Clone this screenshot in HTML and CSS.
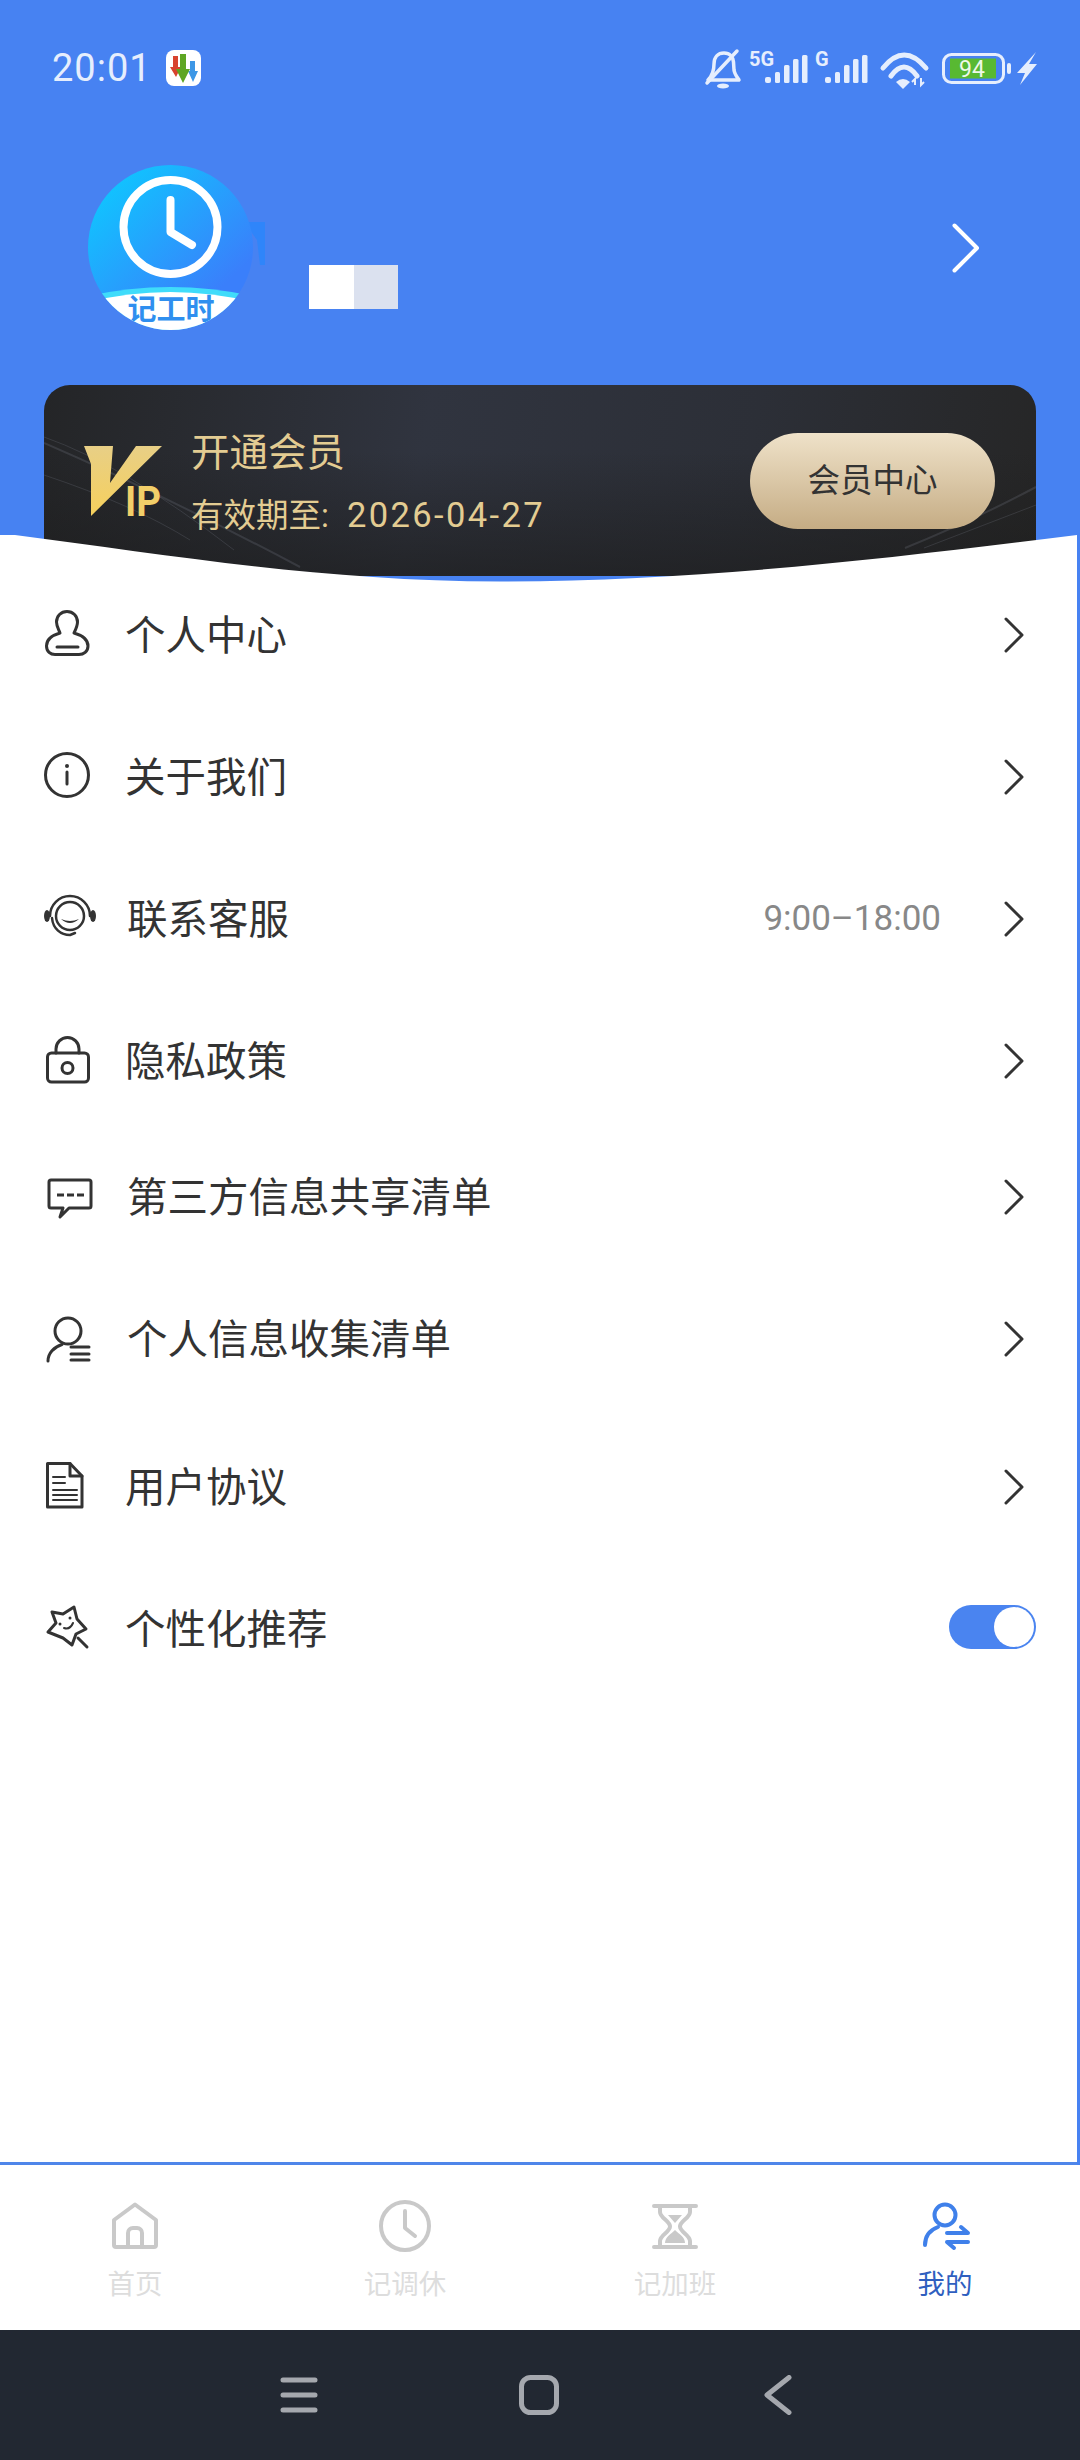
FILE: index.html
```html
<!DOCTYPE html>
<html lang="zh-CN">
<head>
    <meta charset="UTF-8">
    <meta name="viewport" content="width=device-width, initial-scale=1.0">
    <title>我的</title>
    <link rel="stylesheet" href="styles.css">
</head>
<body>
    <svg class="defs" width="0" height="0">
        <symbol id="chevron" viewBox="0 0 20 36">
            <path d="M2 2 L18 18 L2 34" fill="none" stroke="currentColor" stroke-width="3" stroke-linecap="round" stroke-linejoin="round"/>
        </symbol>
    </svg>

    <div class="app">
        <header class="header">
            <div class="statusbar">
                <div class="status-left">
                    <span class="clock">20:01</span>
                    <svg class="app-badge" viewBox="0 0 35 36">
                        <rect width="35" height="36" rx="8" fill="#fff"/>
                        <path d="M7 6h5v11h3l-5 10-6-10h3z" fill="#d8432f"/>
                        <path d="M24 11h5v10h3l-5 11-5-11h2z" fill="#3d97e6"/>
                        <path d="M14 4h6v15h4l-7 14-7-14h4z" fill="#5ea623"/>
                    </svg>
                </div>
                <svg class="status-right" viewBox="700 45 340 50" fill="#e6eefd">
                    <g fill="none" stroke="#e6eefd" stroke-width="3.500" stroke-linecap="round" stroke-linejoin="round">
                        <path d="M708 80 C713 75 714 70 714 64 C714 57 718 53 724 53 C730 53 733 57 733.500 62 L734 70 C734.500 74 737 77 739 80 Z"/>
                        <path d="M707 83 L737 51"/>
                    </g>
                    <ellipse cx="723" cy="86" rx="6" ry="2.500"/>
                    <text class="status-net" x="749" y="66">5G</text>
                    <rect x="765" y="77" width="6" height="6" rx="2"/>
                    <rect x="775" y="72" width="5" height="11" rx="1.500"/>
                    <rect x="784" y="65" width="5.500" height="18" rx="1.500"/>
                    <rect x="793" y="59" width="5.500" height="24" rx="1.500"/>
                    <rect x="802" y="55" width="5.500" height="28" rx="1.500"/>
                    <text class="status-net" x="815" y="66">G</text>
                    <rect x="825" y="77" width="6" height="6" rx="2"/>
                    <rect x="835" y="72" width="5" height="11" rx="1.500"/>
                    <rect x="844" y="65" width="5.500" height="18" rx="1.500"/>
                    <rect x="853" y="59" width="5.500" height="24" rx="1.500"/>
                    <rect x="862" y="55" width="5.500" height="28" rx="1.500"/>
                    <g fill="none" stroke="#e6eefd" stroke-width="5" stroke-linecap="round">
                        <path d="M883 68 Q904 42 926 68"/>
                        <path d="M891 76 Q904 58 917 76"/>
                    </g>
                    <path d="M896 82 Q903 76 910 82 L903 89 Z"/>
                    <path d="M915 85 V79 L912 82 M921 78 V85 L924 82" fill="none" stroke="#e6eefd" stroke-width="2"/>
                    <rect x="943.500" y="54.500" width="60" height="28" rx="8" fill="none" stroke="#e6eefd" stroke-width="3"/>
                    <rect x="950" y="58.500" width="46" height="20" fill="#58b932"/>
                    <text class="status-batt" x="972" y="76.500" text-anchor="middle">94</text>
                    <rect x="1007" y="63" width="4" height="11" rx="2"/>
                    <path d="M1036 52 L1017 73 L1025 73 L1020 85 L1037 64 L1029 64 Z"/>
                </svg>
            </div>

            <div class="profile">
                <svg class="avatar" viewBox="88 165 180 165">
                    <defs>
                        <linearGradient id="avatarBg" x1="0.15" y1="0.05" x2="0.8" y2="0.75">
                            <stop offset="0" stop-color="#0fc6ff"/>
                            <stop offset="1" stop-color="#3a7ffb"/>
                        </linearGradient>
                        <clipPath id="avatarClip">
                            <circle cx="170.500" cy="247.500" r="82.500"/>
                        </clipPath>
                    </defs>
                    <path d="M244 222 H265 V265 H260 L257 240 Z" fill="#2f85fa"/>
                    <circle cx="170.500" cy="247.500" r="82.500" fill="url(#avatarBg)"/>
                    <g clip-path="url(#avatarClip)">
                        <path d="M88 296 Q170 278 253 296 V330 H88 Z" fill="#3fdcfa"/>
                        <path d="M88 302 Q170 282 253 302 V330 H88 Z" fill="#fff"/>
                        <text class="avatar-label" x="171" y="320" text-anchor="middle">记工时</text>
                    </g>
                    <circle cx="170.500" cy="227" r="47" fill="none" stroke="#fff" stroke-width="8"/>
                    <path d="M170.500 200 V232 L192 245" fill="none" stroke="#fff" stroke-width="8" stroke-linecap="round" stroke-linejoin="round"/>
                </svg>
                <div class="name-mask">
                    <span class="mask-white"></span>
                    <span class="mask-grey"></span>
                </div>
                <svg class="profile-arrow" viewBox="0 0 28 50">
                    <path d="M2.500 2.500 L25 25 L2.500 47.500" fill="none" stroke="#fff" stroke-width="4" stroke-linecap="round" stroke-linejoin="round"/>
                </svg>
            </div>

            <div class="vip-card">
                <svg class="vip-lines" viewBox="0 0 992 191" preserveAspectRatio="none">
                    <g fill="none" stroke="#8a90a0" stroke-opacity="0.2">
                        <path d="M0 58 Q120 110 256 182" stroke-width="2"/>
                        <path d="M0 52 Q80 80 190 165" stroke-width="1"/>
                        <path d="M0 90 Q90 120 146 155" stroke-width="1"/>
                        <path d="M861 163 Q930 135 992 102" stroke-width="2"/>
                        <path d="M880 163 Q940 140 992 120" stroke-width="1"/>
                    </g>
                </svg>
                <svg class="vip-logo" viewBox="0 0 78 72">
                    <defs>
                        <linearGradient id="vipGold" x1="0.3" y1="0" x2="0.3" y2="1">
                            <stop offset="0" stop-color="#e8cf86"/>
                            <stop offset="1" stop-color="#f6d05c"/>
                        </linearGradient>
                    </defs>
                    <path d="M0 1 H29 L26 38 L52 1 H78 L7 71 V19 Z" fill="url(#vipGold)"/>
                    <text class="vip-ip" x="41" y="71" textLength="36" lengthAdjust="spacingAndGlyphs">IP</text>
                </svg>
                <div class="vip-text">
                    <div class="vip-title">开通会员</div>
                    <div class="vip-date">有效期至: <span class="vip-day">2026-04-27</span></div>
                </div>
                <div class="vip-button">会员中心</div>
            </div>
        </header>

        <main class="sheet">
            <svg class="wave" viewBox="0 0 1077 47" preserveAspectRatio="none">
                <path d="M0 0 L15 0 C170 20 320 46 500 46.500 C700 46.500 900 22 1077 0 V47 H0 Z" fill="#fff"/>
            </svg>
            <div class="menu">
                <div class="row">
                    <svg class="row-icon" viewBox="0 0 56 56">
                        <path d="M23 6.500 C17 6.500 12.500 11 12.500 17 C12.500 21 14.500 24 16 28 C9 30 2.500 34 2.500 41 C2.500 46.500 6.500 49.500 11 49.500 H35 C39.500 49.500 44 46.500 44 41 C44 34 37 30 30 28 C32 24 33.500 21 33.500 17 C33.500 11 29 6.500 23 6.500 Z"/>
                        <path d="M13 42 H34"/>
                    </svg>
                    <span class="row-label">个人中心</span>
                    <svg class="row-arrow"><use href="#chevron"/></svg>
                </div>
                <div class="row">
                    <svg class="row-icon" viewBox="0 0 56 56">
                        <circle cx="23" cy="28" r="21.500"/>
                        <circle class="icon-dot" cx="23" cy="19" r="2"/>
                        <path d="M23 25 V37"/>
                    </svg>
                    <span class="row-label">关于我们</span>
                    <svg class="row-arrow"><use href="#chevron"/></svg>
                </div>
                <div class="row row-wide">
                    <svg class="row-icon icon-thin" viewBox="0 0 56 56">
                        <path d="M6 27 A20 20 0 0 1 46 27"/>
                        <circle cx="26" cy="27" r="14"/>
                        <path d="M8 29 C9 40 17 46 26 46 L31 44"/>
                        <path class="icon-solid" d="M17 30 Q26 38 35 30 Q26 34 17 30 Z"/>
                        <ellipse class="icon-solid" cx="3" cy="27" rx="3" ry="6"/>
                        <ellipse class="icon-solid" cx="49" cy="27" rx="3" ry="6"/>
                    </svg>
                    <span class="row-label">联系客服</span>
                    <span class="row-note">9:00–18:00</span>
                    <svg class="row-arrow"><use href="#chevron"/></svg>
                </div>
                <div class="row">
                    <svg class="row-icon" viewBox="0 0 56 56">
                        <rect x="3.500" y="22" width="41" height="29" rx="4"/>
                        <path d="M12 22 V18 A11.500 11.500 0 0 1 35 18 V22"/>
                        <circle cx="23.500" cy="37" r="5.500"/>
                    </svg>
                    <span class="row-label">隐私政策</span>
                    <svg class="row-arrow"><use href="#chevron"/></svg>
                </div>
                <div class="row row-wide row-tight">
                    <svg class="row-icon" viewBox="0 0 56 56">
                        <path d="M7 13 H45 A2 2 0 0 1 47 15 V39 A2 2 0 0 1 45 41 H25 L16 50 L19 41 H7 A2 2 0 0 1 5 39 V15 A2 2 0 0 1 7 13 Z"/>
                        <path d="M13 28 H40" stroke-dasharray="7 3" stroke-linecap="butt"/>
                    </svg>
                    <span class="row-label">第三方信息共享清单</span>
                    <svg class="row-arrow"><use href="#chevron"/></svg>
                </div>
                <div class="row row-wide">
                    <svg class="row-icon" viewBox="0 0 56 56">
                        <circle cx="24" cy="22" r="13"/>
                        <path d="M4 52 C4 44 10 38 18 35.500"/>
                        <path d="M27 38 H45 M27 45 H45 M27 51 H45"/>
                    </svg>
                    <span class="row-label">个人信息收集清单</span>
                    <svg class="row-arrow"><use href="#chevron"/></svg>
                </div>
                <div class="row row-loose">
                    <svg class="row-icon" viewBox="0 0 56 56">
                        <path d="M3.500 6.500 H26 L38 19 V50 H3.500 Z"/>
                        <path d="M26 6.500 V19 H38"/>
                        <path class="icon-lines" d="M9 20 H21 M9 26 H21 M9 33 H33 M9 38 H33 M9 43 H33"/>
                    </svg>
                    <span class="row-label">用户协议</span>
                    <svg class="row-arrow"><use href="#chevron"/></svg>
                </div>
                <div class="row">
                    <svg class="row-icon" viewBox="0 0 56 56">
                        <path d="M8 13 L19 15 L30 8 L33 20 L42 30 L32 35 L28 46 L19 39 L4 33 L12 24 Z"/>
                        <path d="M34 39 L43 48"/>
                        <path class="icon-lines" d="M20 29 Q26 31 29 24"/>
                        <circle class="icon-dot" cx="16" cy="25" r="1.500"/>
                        <circle class="icon-dot" cx="26" cy="19" r="1.500"/>
                    </svg>
                    <span class="row-label">个性化推荐</span>
                    <div class="switch"><span class="switch-knob"></span></div>
                </div>
            </div>
        </main>

        <nav class="tabbar">
            <div class="tab">
                <svg class="tab-icon" viewBox="0 0 52 52">
                    <path d="M5 20 L26 4.500 L47 20 V45 A2 2 0 0 1 45 47 H7 A2 2 0 0 1 5 45 Z"/>
                    <path d="M19 47 V33 A5 5 0 0 1 24 28 H28 A5 5 0 0 1 33 33 V47"/>
                </svg>
                <span class="tab-label">首页</span>
            </div>
            <div class="tab">
                <svg class="tab-icon" viewBox="0 0 52 52">
                    <circle cx="26" cy="26" r="24"/>
                    <path d="M26 11 V28 L36 36"/>
                </svg>
                <span class="tab-label">记调休</span>
            </div>
            <div class="tab">
                <svg class="tab-icon" viewBox="0 0 52 52">
                    <path d="M5 6 H47 M5 47 H47"/>
                    <path d="M11 6 V12 C11 18 21 21 21 26.500 C21 32 11 35 11 41 V47 M41 6 V12 C41 18 31 21 31 26.500 C31 32 41 35 41 41 V47"/>
                    <path class="tab-fill" d="M19 15 H33 L26 23 Z M26 30 C30 34 36 37 36 43 H16 C16 37 22 34 26 30 Z"/>
                </svg>
                <span class="tab-label">记加班</span>
            </div>
            <div class="tab tab-active">
                <svg class="tab-icon" viewBox="0 0 52 52">
                    <circle cx="26" cy="15" r="10.500"/>
                    <path d="M6 45 C6 36 11 30 19 27"/>
                    <path d="M28 33 H49 L42 27 M49 42 H28 L35 48"/>
                </svg>
                <span class="tab-label">我的</span>
            </div>
        </nav>

        <div class="navbar">
            <svg class="nav-icon" viewBox="0 0 40 40">
                <path d="M4 5 H36 M4 20 H36 M4 35 H36"/>
            </svg>
            <svg class="nav-icon" viewBox="0 0 40 40">
                <rect x="2.500" y="2.500" width="35" height="35" rx="9"/>
            </svg>
            <svg class="nav-icon" viewBox="0 0 40 40">
                <path d="M30 2.500 L8 20 L30 37.500"/>
            </svg>
        </div>
    </div>
</body>
</html>
```

FILE: styles.css
```css
* {
    box-sizing: border-box;
}
body {
    margin: 0;
    font-family: Roboto, "Noto Sans CJK SC", sans-serif;
    color: #333;
}
.defs {
    display: block;
    height: 0;
}
.app {
    width: 1080px;
    height: 2460px;
    display: flex;
    flex-direction: column;
    background: #4782f2;
    overflow: hidden;
}

/* status bar */
.statusbar {
    height: 136px;
    display: flex;
    align-items: center;
    justify-content: space-between;
    padding: 0 40px 0 52px;
}
.status-left {
    display: flex;
    align-items: center;
    gap: 14px;
}
.clock {
    font-size: 38px;
    line-height: 44px;
    letter-spacing: 1px;
    color: #e6eefd;
}
.app-badge {
    width: 35px;
    height: 36px;
}
.status-right {
    width: 340px;
    height: 50px;
    margin-top: 3px;
}
.status-net {
    font-size: 20px;
    font-weight: 700;
}
.status-batt {
    font-size: 23px;
    fill: #eef8e9;
}

/* profile */
.profile {
    display: flex;
    align-items: center;
    padding: 29px 100px 0 88px;
}
.avatar {
    width: 180px;
    height: 165px;
}
.avatar-label {
    font-size: 29px;
    font-weight: 700;
    fill: #2f8fef;
}
.name-mask {
    display: flex;
    align-self: flex-end;
    margin: 0 0 21px 41px;
}
.mask-white,
.mask-grey {
    display: block;
    width: 44.500px;
    height: 44px;
}
.mask-white {
    background: #fff;
}
.mask-grey {
    background: #dbe1ef;
}
.profile-arrow {
    width: 28px;
    height: 50px;
    margin-left: auto;
}

/* vip card */
.vip-card {
    position: relative;
    height: 191px;
    margin: 55px 44px 0;
    padding: 0 41px 0 40px;
    display: flex;
    align-items: center;
    border-radius: 26px 26px 0 0;
    background:
        linear-gradient(180deg, rgba(30, 30, 30, 0) 35%, rgba(28, 28, 28, 0.65) 100%),
        linear-gradient(100deg, #242527 0%, #30343f 38%, #2c2f37 70%, #262626 100%);
}
.vip-lines {
    position: absolute;
    top: 0;
    left: 0;
    width: 100%;
    height: 100%;
}
.vip-logo {
    position: relative;
    width: 78px;
    height: 72px;
    overflow: visible;
}
.vip-ip {
    font-size: 42px;
    fill: #f2cf69;
    font-weight: 700;
}
.vip-text {
    position: relative;
    margin: 7px 0 0 29px;
    color: #e3cc92;
}
.vip-title {
    font-size: 38.500px;
    line-height: 62px;
}
.vip-date {
    font-size: 32.500px;
    line-height: 62px;
}
.vip-day {
    margin-left: 10px;
    font-size: 34.500px;
    letter-spacing: 2.400px;
}
.vip-button {
    position: relative;
    width: 245px;
    height: 96px;
    margin-left: auto;
    border-radius: 48px;
    background: linear-gradient(180deg, #efe2c9, #c5ac84);
    font-size: 32.500px;
    line-height: 96px;
    text-align: center;
    color: #333;
}

/* menu */
.sheet {
    position: relative;
    flex: 1;
    width: 1077px;
    margin-top: -41px;
    display: flex;
    flex-direction: column;
    border-bottom: 3px solid #4f86ea;
}
.wave {
    display: block;
    width: 1077px;
    height: 47px;
    flex: none;
}
.menu {
    flex: 1;
    padding: 1px 53px 0 44px;
    display: flex;
    flex-direction: column;
    gap: 42px;
    background: #fff;
}
.row {
    height: 100px;
    flex: none;
    display: flex;
    align-items: center;
}
.row-tight {
    margin-top: -6px;
}
.row-loose {
    margin-top: 6px;
}
.row-icon {
    width: 56px;
    height: 56px;
    margin-right: 25px;
    flex: none;
    fill: none;
    stroke: #333;
    stroke-width: 3;
    stroke-linecap: round;
    stroke-linejoin: round;
}
.row-wide .row-icon {
    margin-right: 27px;
}
.icon-thin {
    stroke-width: 2.500;
}
.icon-dot,
.icon-solid {
    fill: #333;
    stroke: none;
}
.icon-lines {
    stroke-width: 2;
}
.row-label {
    margin-top: -2px;
    font-size: 40.500px;
    color: #333;
}
.row-note {
    margin-left: auto;
    margin-right: 63px;
    margin-top: 2px;
    font-size: 35px;
    color: #888;
}
.row-arrow {
    width: 20px;
    height: 36px;
    margin-top: 3px;
    margin-left: auto;
    color: #333;
}
.row-note + .row-arrow {
    margin-left: 0;
}
.switch {
    width: 87px;
    height: 44px;
    margin-left: auto;
    margin-right: -12px;
    padding: 2px;
    display: flex;
    justify-content: flex-end;
    border-radius: 22px;
    background: #4a84f0;
}
.switch-knob {
    width: 40px;
    height: 40px;
    border-radius: 50%;
    background: #fff;
}

/* bottom tabs */
.tabbar {
    height: 165px;
    flex: none;
    padding-top: 35px;
    display: grid;
    grid-template-columns: repeat(4, 270px);
    background: #fff;
}
.tab {
    display: flex;
    flex-direction: column;
    align-items: center;
}
.tab-icon {
    width: 52px;
    height: 52px;
    fill: none;
    stroke: #c9c9c9;
    stroke-width: 4;
    stroke-linecap: round;
    stroke-linejoin: round;
}
.tab-fill {
    fill: #c9c9c9;
    stroke: none;
}
.tab-label {
    margin-top: 15px;
    font-size: 27.500px;
    line-height: 36px;
    color: #ddd;
}
.tab-active .tab-icon {
    stroke: #3f80ea;
}
.tab-active .tab-label {
    color: #2f5fbf;
}

/* system nav */
.navbar {
    height: 130px;
    flex: none;
    padding-right: 2px;
    display: flex;
    align-items: center;
    justify-content: center;
    gap: 200px;
    background: #222832;
}
.nav-icon {
    width: 40px;
    height: 40px;
    fill: none;
    stroke: #a5a8ae;
    stroke-width: 5;
    stroke-linecap: round;
    stroke-linejoin: round;
}
```
